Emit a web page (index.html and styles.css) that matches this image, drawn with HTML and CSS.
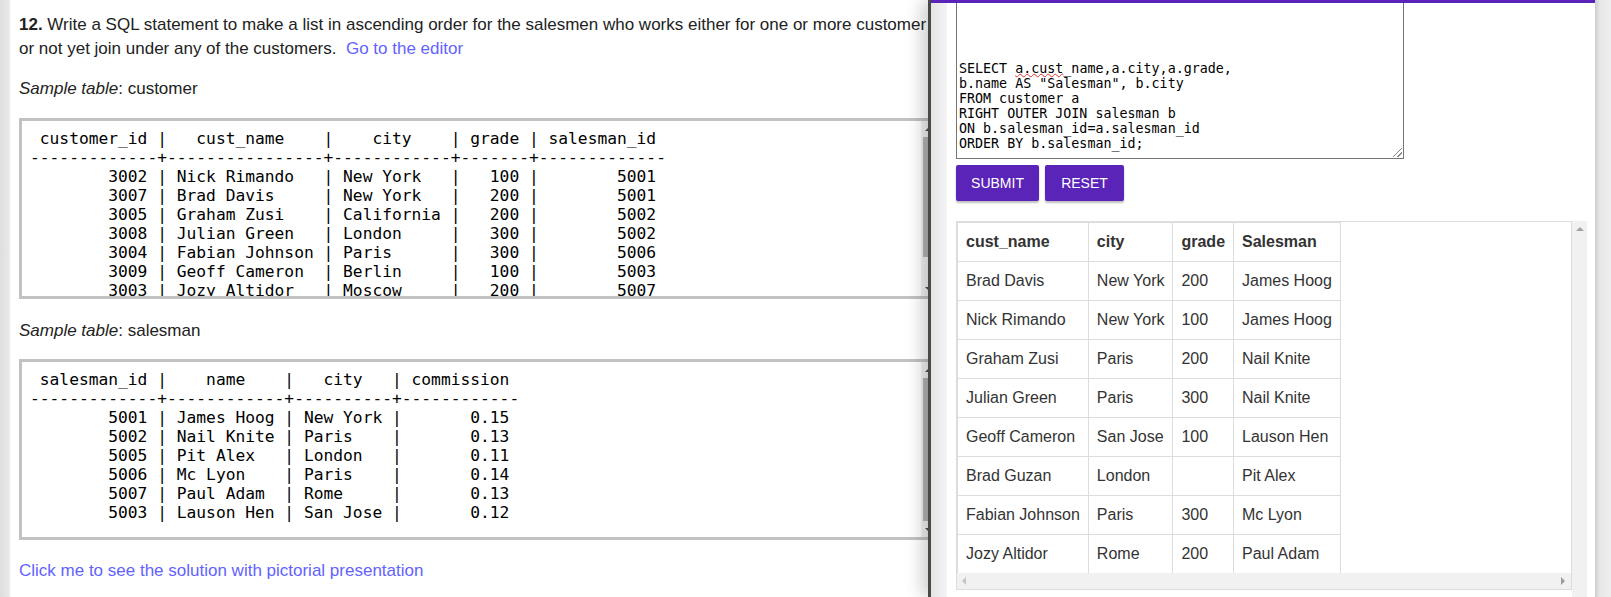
FILE: index.html
```html
<!DOCTYPE html>
<html>
<head>
<meta charset="utf-8">
<link rel="stylesheet" href="styles.css">
</head>
<body>
<div class="page">
  <main class="left">
    <div class="left-inner">
      <p class="question"><b>12.</b> Write a SQL statement to make a list in ascending order for the salesmen who works either for one or more customer<br>or not yet join under any of the customers.&nbsp; <a class="link" href="#">Go to the editor</a></p>
      <p class="caption"><i>Sample table</i>: customer</p>
      <div class="sample">
<pre class="sample-text"> customer_id |   cust_name    |    city    | grade | salesman_id
-------------+----------------+------------+-------+-------------
        3002 | Nick Rimando   | New York   |   100 |        5001
        3007 | Brad Davis     | New York   |   200 |        5001
        3005 | Graham Zusi    | California |   200 |        5002
        3008 | Julian Green   | London     |   300 |        5002
        3004 | Fabian Johnson | Paris      |   300 |        5006
        3009 | Geoff Cameron  | Berlin     |   100 |        5003
        3003 | Jozy Altidor   | Moscow     |   200 |        5007
        3001 | Brad Guzan     | London     |       |        5005</pre>
        <div class="scrollbar">
          <div class="sb-btn"><span class="tri-up"></span></div>
          <div class="sb-track"><div class="sb-thumb thumb-customer"></div></div>
          <div class="sb-btn"><span class="tri-down"></span></div>
        </div>
      </div>
      <p class="caption caption-second"><i>Sample table</i>: salesman</p>
      <div class="sample sample-second">
<pre class="sample-text"> salesman_id |    name    |   city   | commission
-------------+------------+----------+------------
        5001 | James Hoog | New York |       0.15
        5002 | Nail Knite | Paris    |       0.13
        5005 | Pit Alex   | London   |       0.11
        5006 | Mc Lyon    | Paris    |       0.14
        5007 | Paul Adam  | Rome     |       0.13
        5003 | Lauson Hen | San Jose |       0.12</pre>
        <div class="scrollbar">
          <div class="sb-btn"><span class="tri-up"></span></div>
          <div class="sb-track"><div class="sb-thumb thumb-salesman"></div></div>
          <div class="sb-btn"><span class="tri-down"></span></div>
        </div>
      </div>
      <p class="solution"><a class="link" href="#">Click me to see the solution with pictorial presentation</a></p>
    </div>
  </main>

  <aside class="editor">
    <div class="gutter gutter-left"></div>
    <div class="editor-main">
      <div class="code">SELECT <span class="typo">a.cust</span>_name,a.city,a.grade,
b.name AS "Salesman", b.city
FROM customer a
RIGHT OUTER JOIN salesman b
ON b.salesman_id=a.salesman_id
ORDER BY b.salesman_id;</div>
      <div class="actions">
        <button class="btn btn-submit">SUBMIT</button>
        <button class="btn btn-reset">RESET</button>
      </div>
      <div class="result-row">
        <div class="result">
          <div class="result-view">
            <table class="grid">
              <tr><th>cust_name</th><th>city</th><th>grade</th><th>Salesman</th></tr>
              <tr><td>Brad Davis</td><td>New York</td><td>200</td><td>James Hoog</td></tr>
              <tr><td>Nick Rimando</td><td>New York</td><td>100</td><td>James Hoog</td></tr>
              <tr><td>Graham Zusi</td><td>Paris</td><td>200</td><td>Nail Knite</td></tr>
              <tr><td>Julian Green</td><td>Paris</td><td>300</td><td>Nail Knite</td></tr>
              <tr><td>Geoff Cameron</td><td>San Jose</td><td>100</td><td>Lauson Hen</td></tr>
              <tr><td>Brad Guzan</td><td>London</td><td></td><td>Pit Alex</td></tr>
              <tr><td>Fabian Johnson</td><td>Paris</td><td>300</td><td>Mc Lyon</td></tr>
              <tr><td>Jozy Altidor</td><td>Rome</td><td>200</td><td>Paul Adam</td></tr>
            </table>
          </div>
          <div class="hscroll">
            <span class="tri-left"></span>
            <span class="tri-right"></span>
          </div>
        </div>
        <div class="vscroll"><div class="vs-btn"><span class="tri-up tri-light"></span></div></div>
      </div>
    </div>
    <div class="gutter gutter-right"></div>
  </aside>
</div>
</body>
</html>
```

FILE: styles.css
```css
* { box-sizing: border-box; }
html, body { margin: 0; padding: 0; }
body {
  width: 1611px;
  height: 597px;
  overflow: hidden;
  background: #fff;
  font-family: "Liberation Sans", Arial, sans-serif;
}
.page { display: flex; height: 597px; }

/* ---------- left page ---------- */
.left {
  width: 928px;
  flex: none;
  overflow: hidden;
  background: linear-gradient(to right, #dedede 0, #e8e8e8 9px, #fff 11px);
}
.left-inner { width: 960px; padding: 13px 0 0 19px; }
.question, .caption, .solution {
  margin: 0;
  font-size: 17px;
  line-height: 24px;
  color: #222;
}
.caption { margin-top: 16px; }
.caption-second { margin-top: 20px; }
.solution { margin-top: 19px; }
.link { color: #6262ff; text-decoration: none; }

.sample {
  margin-top: 17px;
  width: 920px;
  height: 181px;
  border: 3px solid #c2c2c2;
  display: flex;
  background: #fff;
}
.sample-second { margin-top: 16px; }
.sample-text {
  flex: 1;
  margin: 0;
  padding: 8px 0 0 8px;
  overflow: hidden;
  font-family: "DejaVu Sans Mono", monospace;
  font-size: 16.25px;
  line-height: 19px;
  color: #000;
}
.scrollbar {
  width: 15px;
  flex: none;
  display: flex;
  flex-direction: column;
  background: #f1f1f1;
}
.sb-btn {
  height: 15px;
  flex: none;
  display: flex;
  align-items: center;
  justify-content: center;
}
.sb-track { flex: 1; padding: 1px 2px; }
.sb-thumb { background: #b4b4b4; }
.thumb-customer { height: 120px; }
.thumb-salesman { height: 143px; }

.tri-up, .tri-down, .tri-left, .tri-right { display: block; width: 0; height: 0; }
.tri-up { border-left: 4px solid transparent; border-right: 4px solid transparent; border-bottom: 4px solid #505050; }
.tri-down { border-left: 4px solid transparent; border-right: 4px solid transparent; border-top: 4px solid #505050; }
.tri-left { border-top: 4px solid transparent; border-bottom: 4px solid transparent; border-right: 4px solid #c4c4c4; }
.tri-right { border-top: 4px solid transparent; border-bottom: 4px solid transparent; border-left: 4px solid #9a9a9a; }
.tri-light { border-bottom-color: #a3a3a3; }

/* ---------- editor panel ---------- */
.editor {
  width: 683px;
  flex: none;
  display: flex;
  border-left: 3px solid #4a4a44;
  position: relative;
  z-index: 1;
  box-shadow: -6px 0 16px rgba(0, 0, 0, 0.2);
}
.gutter { width: 16px; flex: none; }
.gutter-left {
  border-top: 3px solid #5a24b8;
  background: linear-gradient(to right, #e4e4e4, #f4f4f4);
}
.gutter-right {
  background: linear-gradient(to right, #cdcdcd, #e8e8e8 5px, #eeeeee);
}
.editor-main {
  width: 648px;
  flex: none;
  border-top: 3px solid #5a24b8;
  background: #fff;
  padding-left: 9px;
}
.code {
  position: relative;
  width: 448px;
  height: 156px;
  border: 1px solid #767676;
  border-top: 0;
  padding: 58px 2px 0;
  font-family: "DejaVu Sans Mono", monospace;
  font-size: 13.33px;
  line-height: 15px;
  white-space: pre;
  color: #000;
}
.code::after {
  content: "";
  position: absolute;
  right: 1px;
  bottom: 1px;
  width: 9px;
  height: 9px;
  background:
    linear-gradient(135deg, transparent 0 45%, #888 45% 52%, transparent 52% 72%, #888 72% 79%, transparent 79%);
}
.typo {
  text-decoration-line: underline;
  text-decoration-style: wavy;
  text-decoration-color: #e03030;
  text-decoration-thickness: 1px;
  text-underline-offset: 0;
}
.actions { display: flex; gap: 6px; margin-top: 6px; }
.btn {
  height: 36px;
  border: 0;
  border-radius: 2px;
  background: #5a24b8;
  color: #fff;
  font-family: "Liberation Sans", Arial, sans-serif;
  font-size: 14px;
  padding: 0;
  box-shadow: 0 2px 2px rgba(0, 0, 0, 0.25);
}
.btn-submit { width: 83px; }
.btn-reset { width: 79px; }

.result-row { display: flex; align-items: flex-start; margin-top: 20px; }
.result {
  width: 616px;
  height: 369px;
  border: 1px solid #dddddd;
  display: flex;
  flex-direction: column;
}
.result-view { height: 351px; overflow: hidden; }
.grid {
  border-collapse: collapse;
  font-family: "Liberation Sans", Arial, sans-serif;
  font-size: 16px;
  line-height: 22px;
  color: #333;
}
.grid th, .grid td {
  border: 1px solid #dddddd;
  padding: 8px;
  text-align: left;
  white-space: nowrap;
}
.grid th { font-weight: bold; }
.hscroll {
  height: 16px;
  background: #f1f1f1;
  display: flex;
  align-items: center;
  justify-content: space-between;
  padding: 0 6px 0 5px;
}
.vscroll {
  width: 15px;
  height: 376px;
  flex: none;
  background: #f1f1f1;
}
.vs-btn { height: 15px; display: flex; align-items: center; justify-content: center; }
```
